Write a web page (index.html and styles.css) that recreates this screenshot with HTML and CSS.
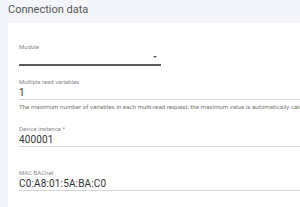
FILE: index.html
```html
<!DOCTYPE html>
<html>
<head>
<meta charset="utf-8">
<link rel="stylesheet" href="styles.css">
</head>
<body>
<div class="page">
  <h1 class="title">Connection data</h1>
  <div class="card">
    <div class="field field-module">
      <div class="label">Module</div>
      <div class="select">
        <span class="arrow"></span>
      </div>
    </div>
    <div class="field field-multi">
      <div class="label">Multiple read variables</div>
      <div class="value">1</div>
      <div class="helper">The maximum number of variables in each multi-read request, the maximum value is automatically calculated based on the device</div>
    </div>
    <div class="field field-device">
      <div class="label">Device instance *</div>
      <div class="value">400001</div>
    </div>
    <div class="field field-mac">
      <div class="label">MAC BACnet</div>
      <div class="value">C0:A8:01:5A:BA:C0</div>
    </div>
  </div>
</div>
</body>
</html>
```

FILE: styles.css
```css
html, body {
  margin: 0;
  padding: 0;
  overflow: hidden;
  background: #f4f5fa;
  font-family: Roboto, "Liberation Sans", sans-serif;
}
.page {
  width: 300px;
  height: 207px;
  overflow: hidden;
}
.title {
  margin: 0;
  padding: 3px 0 0 8px;
  height: 20px;
  box-sizing: border-box;
  font-size: 11px;
  line-height: 13px;
  font-weight: 400;
  color: #555;
}
.card {
  margin: 3px 0 0 8px;
  width: 400px;
  height: 200px;
  background: #fff;
  padding: 20px 0 0 11px;
  box-sizing: border-box;
  display: flex;
  flex-direction: column;
}
.field {
  width: 380px;
}
.label {
  font-size: 6px;
  line-height: 8px;
  height: 8px;
  color: #8a8a8a;
  white-space: nowrap;
}
.value {
  font-size: 10px;
  line-height: 13px;
  height: 13px;
  color: #333;
  border-bottom: 1px solid #d6d6d6;
  white-space: nowrap;
  letter-spacing: 0.15px;
}
.select {
  width: 142px;
  height: 13px;
  border-bottom: 2px solid #5a5a5a;
  position: relative;
}
.arrow {
  position: absolute;
  right: 4px;
  top: 5px;
  width: 0;
  height: 0;
  border-left: 2.5px solid transparent;
  border-right: 2.5px solid transparent;
  border-top: 2.5px solid #555;
}
.helper {
  margin-top: 3px;
  font-size: 6.2px;
  line-height: 8px;
  color: #777;
  white-space: nowrap;
}
.field-multi {
  margin-top: 12px;
}
.field-device {
  margin-top: 14px;
}
.field-mac {
  margin-top: 22px;
}
```
